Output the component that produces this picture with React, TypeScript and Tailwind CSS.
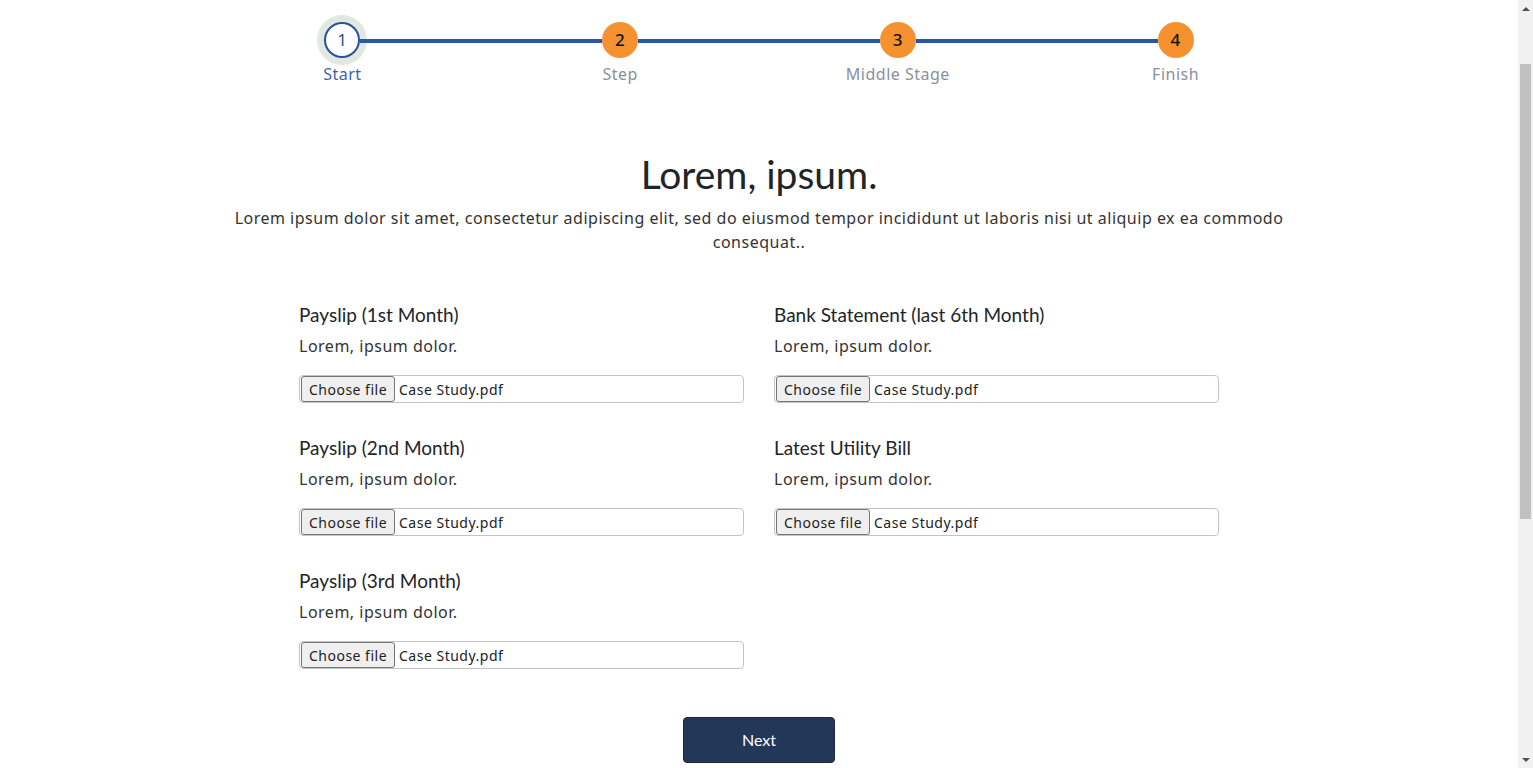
import React from 'react';

const body = { fontFamily: '"Noto Sans", "DejaVu Sans", sans-serif', letterSpacing: '0.5px' };
const head = { fontFamily: 'Lato, "Noto Sans", sans-serif' };

interface Step {
  n: number;
  label: string;
}

const steps: Step[] = [
  { n: 1, label: 'Start' },
  { n: 2, label: 'Step' },
  { n: 3, label: 'Middle Stage' },
  { n: 4, label: 'Finish' },
];

const fields = [
  ['Payslip (1st Month)', 'Bank Statement (last 6th Month)'],
  ['Payslip (2nd Month)', 'Latest Utility Bill'],
  ['Payslip (3rd Month)', null],
];

const Stepper: React.FC = () => (
  <div className="grid grid-cols-4 w-[1111px] mx-auto pt-[17px]" style={body}>
    {steps.map((s, i) => (
      <div key={s.n} className="flex flex-col items-center">
        <div className="flex items-center w-full h-[46px]">
          <div className={`flex-1 h-[4px] mt-[2px] ${i > 0 ? 'bg-[#2757a6]' : 'bg-transparent'}`} />
          {i === 0 ? (
            <div className="w-[36px] h-[36px] rounded-full bg-white border-2 border-[#2b4f9e] ring-[7px] ring-[#dfe9df] flex items-center justify-center text-[17px] text-[#2b4f9e]">
              {s.n}
            </div>
          ) : (
            <div className="w-[36px] h-[36px] rounded-full bg-[#f5922f] flex items-center justify-center text-[17px] font-medium text-[#111]">
              {s.n}
            </div>
          )}
          <div className={`flex-1 h-[4px] mt-[2px] ${i < steps.length - 1 ? 'bg-[#2757a6]' : 'bg-transparent'}`} />
        </div>
        <div className={`text-[16px] leading-[22px] ${i === 0 ? 'text-[#3d62ad]' : 'text-[#8b9099]'}`}>{s.label}</div>
      </div>
    ))}
  </div>
);

const FileField: React.FC<{ title: string }> = ({ title }) => (
  <div className="flex flex-col pb-[32px]">
    <div className="text-[19px] leading-[27px] text-[#212529] -mt-px mb-px" style={head}>{title}</div>
    <div className="mt-[5px] text-[16px] leading-[24px] text-[#333]" style={body}>Lorem, ipsum dolor.</div>
    <div className="mt-[17px] h-[28px] border border-[#c4c4c4] rounded-[4px] flex items-center px-px text-[14px] text-[#222]" style={body}>
      <div className="h-[26px] w-[94px] bg-[#efefef] border border-[#767676] rounded-[3px] flex items-center justify-center text-[14px] text-[#222]">
        Choose file
      </div>
      <span className="ml-[4px]">Case Study.pdf</span>
    </div>
  </div>
);

const Scrollbar: React.FC = () => (
  <div className="w-[15px] h-full bg-[#f1f1f1] flex flex-col items-center">
    <div className="h-[17px] flex items-center justify-center">
      <div className="w-0 h-0 border-x-[4px] border-x-transparent border-b-[4px] border-b-[#505050]" />
    </div>
    <div className="flex-1 w-full flex justify-center">
      <div className="mt-[47px] w-[11px] h-[455px] bg-[#c1c1c1]" />
    </div>
    <div className="h-[17px] flex items-center justify-center">
      <div className="w-0 h-0 border-x-[4px] border-x-transparent border-t-[4px] border-t-[#505050]" />
    </div>
  </div>
);

export default function App() {
  return (
    <div className="h-[768px] flex bg-white overflow-hidden">
      <main className="flex-1 min-w-0">
        <Stepper />

        <div className="w-[1110px] mx-auto mt-[65px] text-center">
          <h1 className="text-[39px] leading-[48px] text-[#212529]" style={head}>Lorem, ipsum.</h1>
          <p className="mt-[8px] text-[16px] leading-[24px] text-[#333]" style={body}>
            Lorem ipsum dolor sit amet, consectetur adipiscing elit, sed do eiusmod tempor incididunt ut laboris nisi ut aliquip ex ea commodo consequat..
          </p>
        </div>

        <div className="w-[920px] mx-auto mt-[48px] grid grid-cols-2 gap-x-[30px]">
          {fields.flatMap((row) => row).map((f, i) =>
            f ? <FileField key={i} title={f} /> : <div key={i} />
          )}
        </div>

        <div className="flex justify-center mt-[16px]">
          <button
            className="w-[152px] h-[46px] bg-[#233759] border border-[#1a2a45] rounded-[4px] text-white text-[16px]"
            style={head}
          >
            Next
          </button>
        </div>
      </main>
      <Scrollbar />
    </div>
  );
}
